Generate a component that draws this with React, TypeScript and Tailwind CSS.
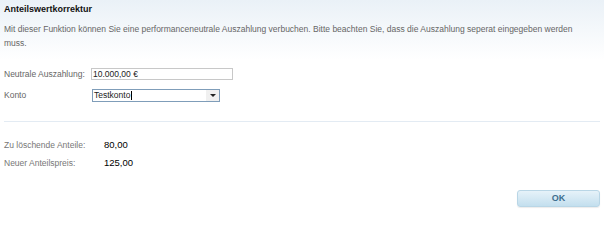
export default function App() {
  return (
    <div className="relative h-[230px] w-[604px] overflow-hidden bg-white font-['Liberation_Sans',Arial,sans-serif] text-[8.5px]">
      {/* Kopfbereich mit Verlauf */}
      <div className="bg-gradient-to-b from-[#eaf1f7] to-white px-[4px] pt-[3px] pb-[10px]">
        <h1 className="h-[12px] text-[9px] font-bold leading-[12px] text-[#111]">Anteilswertkorrektur</h1>
        <p className="mt-[7px] w-[592px] leading-[14px] text-[#666]">
          Mit dieser Funktion können Sie eine performanceneutrale Auszahlung verbuchen. Bitte beachten Sie, dass die Auszahlung seperat eingegeben werden muss.
        </p>
      </div>

      {/* Formular */}
      <div className="mt-[8px] flex flex-col gap-[9px] px-[4px]">
        <div className="flex h-[12px] items-center">
          <label className="w-[87px] leading-[12px] text-[#666]">Neutrale Auszahlung:</label>
          <div className="flex h-[12px] w-[142px] items-center border border-[#c8c8c8] bg-white px-[1px] text-[#222]">
            10.000,00 €
          </div>
        </div>
        <div className="flex h-[13px] items-center">
          <label className="w-[88px] leading-[13px] text-[#666]">Konto</label>
          <div className="flex h-[13px] w-[128px] items-center justify-between border border-[#7f9db9] bg-white pl-[1px] text-[#222]">
            <span className="flex items-center">
              Testkonto<span className="ml-[1px] inline-block h-[9px] w-px bg-black" />
            </span>
            <span className="flex h-[11px] w-[13px] items-center justify-center bg-[#f0f0f0]">
              <svg width="6" height="3" viewBox="0 0 6 3">
                <path d="M0 0h6L3 3z" fill="#222" />
              </svg>
            </span>
          </div>
        </div>
      </div>

      <div className="mx-[4px] mt-[19px] h-px bg-[#e3ebf3]" />

      {/* Ergebnis */}
      <div className="mt-[17px] flex flex-col gap-[6px] px-[4px]">
        <div className="flex h-[12px] items-center">
          <span className="w-[100px] text-[#777]">Zu löschende Anteile:</span>
          <span className="text-[9.5px] text-black">80,00</span>
        </div>
        <div className="flex h-[12px] items-center">
          <span className="w-[100px] text-[#777]">Neuer Anteilspreis:</span>
          <span className="text-[9.5px] text-black">125,00</span>
        </div>
      </div>

      <div className="absolute right-[4px] top-[190px]">
        <button className="flex h-[17px] w-[83px] items-center justify-center rounded-[3px] border border-[#b9d6e6] bg-gradient-to-b from-[#e6f2f9] to-[#c3dfee] text-[9px] font-bold text-[#3d6e8e] shadow-[0_1px_1px_rgba(0,0,0,0.08)]">
          OK
        </button>
      </div>
    </div>
  );
}
